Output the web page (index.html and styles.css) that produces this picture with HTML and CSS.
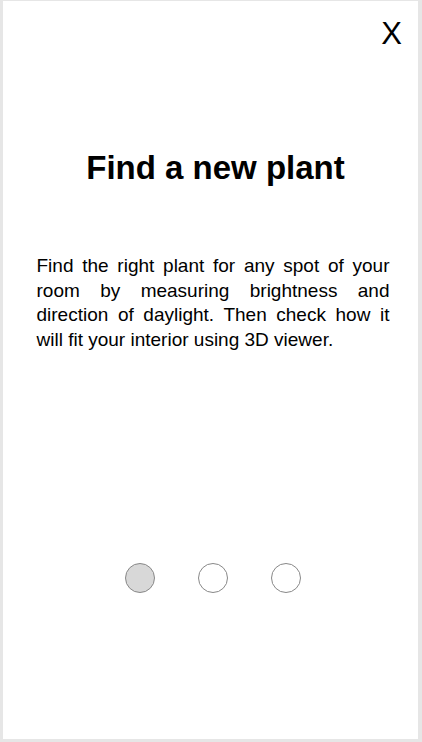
FILE: index.html
```html
<!DOCTYPE html>
<html>
<head>
<meta charset="utf-8">
<link rel="stylesheet" href="styles.css">
</head>
<body>
<div class="screen">
  <div class="topbar"><span class="close">X</span></div>
  <h1 class="title">Find a new plant</h1>
  <p class="desc">Find the right plant for any spot of your room by measuring brightness and direction of daylight. Then check how it will fit your interior using 3D viewer.</p>
  <div class="dots">
    <span class="dot active"></span>
    <span class="dot"></span>
    <span class="dot"></span>
  </div>
</div>
</body>
</html>
```
FILE: styles.css
```css
html, body {
  margin: 0;
  padding: 0;
}
body {
  width: 422px;
  height: 742px;
  background: #e6e6e6;
  font-family: "Liberation Sans", Arial, sans-serif;
  color: #000;
  padding: 1px 4px 3px 3px;
  box-sizing: border-box;
}
.screen {
  background: #fff;
  height: 100%;
  box-sizing: border-box;
  padding-left: 5px;
  display: flex;
  flex-direction: column;
  align-items: center;
}
.topbar {
  align-self: stretch;
  display: flex;
  justify-content: flex-end;
  padding: 15px 16px 0 0;
  height: 40px;
}
.close {
  font-size: 31px;
  line-height: 36px;
}
.title {
  margin: 92px 0 0 0;
  padding-left: 5px;
  font-size: 33px;
  font-weight: bold;
  line-height: 40px;
}
.desc {
  margin: 66px 0 0 0;
  width: 353px;
  font-size: 19px;
  line-height: 24.7px;
  text-align: justify;
}
.dots {
  margin-top: 210px;
  display: flex;
  gap: 43px;
}
.dot {
  width: 28px;
  height: 28px;
  border: 1.5px solid #888;
  border-radius: 50%;
  background: #fff;
}
.dot.active {
  background: #d8d8d8;
}
```
